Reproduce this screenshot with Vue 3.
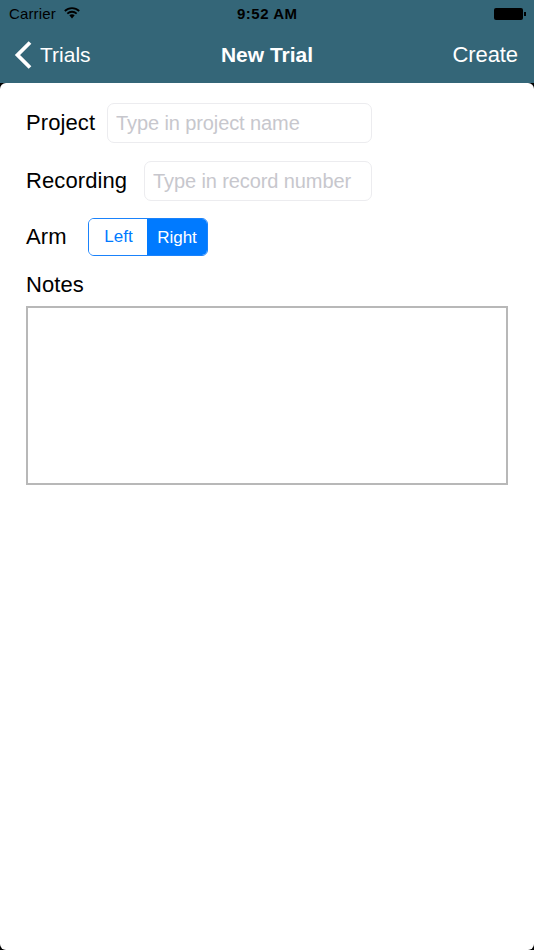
<template>
  <div class="screen">
    <header class="topbar">
      <div class="status">
        <div class="status-left">
          <span class="carrier">Carrier</span>
          <svg class="wifi" width="16" height="12" viewBox="0 0 16 12">
            <path d="M.8 4C4.9 .1 11.1 .1 15.2 4" />
            <path d="M3.3 6.6C6 4.1 10 4.1 12.7 6.6" />
            <path class="wedge" d="M5.3 8.3C7 7 9 7 10.7 8.3L8 11.6Z" />
          </svg>
        </div>
        <span class="clock">9:52 AM</span>
        <div class="battery">
          <div class="battery-body"></div>
          <div class="battery-nub"></div>
        </div>
      </div>
      <nav class="nav">
        <a class="back">
          <svg width="18" height="28" viewBox="0 0 18 28">
            <path d="M16 1.5L3.5 14L16 26.5" />
          </svg>
          <span>Trials</span>
        </a>
        <span class="title">New Trial</span>
        <a class="create">Create</a>
      </nav>
    </header>

    <main class="card">
      <div class="row">
        <label class="label label-project">Project</label>
        <input class="field" type="text" placeholder="Type in project name" />
      </div>
      <div class="row">
        <label class="label label-recording">Recording</label>
        <input class="field" type="text" placeholder="Type in record number" />
      </div>
      <div class="row row-arm">
        <label class="label label-arm">Arm</label>
        <div class="segment">
          <button
            v-for="side in sides"
            :key="side"
            type="button"
            class="segment-btn"
            :class="{ active: arm === side }"
            @click="arm = side"
          >
            {{ side }}
          </button>
        </div>
      </div>
      <label class="label notes-label">Notes</label>
      <textarea class="notes"></textarea>
    </main>
  </div>
</template>

<script setup>
import { ref } from "vue";

const sides = ["Left", "Right"];
const arm = ref("Right");
</script>

<style>
html,
body {
  background: #000;
}
</style>

<style scoped>
.screen {
  width: 534px;
  height: 950px;
  display: flex;
  flex-direction: column;
  background: #000;
  font-family: "Liberation Sans", Arial, sans-serif;
  overflow: hidden;
}

.topbar {
  height: 83px;
  flex-shrink: 0;
  background: #346678;
}

.status {
  height: 29px;
  display: flex;
  align-items: center;
  justify-content: space-between;
  position: relative;
  padding: 0 8px 2px 9px;
  box-sizing: border-box;
  font-size: 15px;
  color: #000;
}

.status-left {
  display: flex;
  align-items: center;
  gap: 8px;
}

.carrier {
  letter-spacing: 0.15px;
}

.wifi {
  margin-top: -2px;
}

.wifi path {
  fill: none;
  stroke: #000;
  stroke-width: 1.8;
}

.wifi .wedge {
  fill: #000;
  stroke: none;
}

.clock {
  position: absolute;
  left: 237px;
  font-weight: bold;
  letter-spacing: 0.5px;
}

.battery {
  display: flex;
  align-items: center;
}

.battery-body {
  width: 29px;
  height: 12px;
  background: #000;
  border-radius: 2px;
}

.battery-nub {
  width: 2px;
  height: 4px;
  margin-left: 1px;
  background: #000;
}

.nav {
  height: 54px;
  display: flex;
  align-items: center;
  justify-content: space-between;
  position: relative;
  padding: 0 16px 2px 14px;
  box-sizing: border-box;
  color: #fff;
}

.back {
  display: flex;
  align-items: center;
  gap: 8px;
  font-size: 21px;
}

.back svg {
  display: block;
}

.back path {
  fill: none;
  stroke: #fff;
  stroke-width: 3.8;
}

.title {
  position: absolute;
  left: 0;
  right: 0;
  text-align: center;
  font-size: 21px;
  font-weight: bold;
}

.create {
  font-size: 22px;
  letter-spacing: -0.1px;
}

.card {
  flex: 1;
  display: flex;
  flex-direction: column;
  padding: 20px 26px 0;
  background: #fff;
  border-radius: 6px;
}

.row {
  display: flex;
  align-items: center;
  width: 346px;
  margin-bottom: 18px;
}

.row-arm {
  margin-top: -1px;
  margin-bottom: 16px;
}

.label {
  flex-shrink: 0;
  font-size: 22px;
  letter-spacing: 0.1px;
  color: #000;
}

.label-project {
  width: 81px;
}

.label-recording {
  width: 118px;
}

.label-arm {
  width: 62px;
}

.field {
  flex: 1;
  min-width: 0;
  height: 40px;
  padding: 0 8px;
  box-sizing: border-box;
  border: 1px solid #ececef;
  border-radius: 7px;
  background: #fff;
  font-family: inherit;
  font-size: 20px;
  letter-spacing: -0.1px;
  outline: none;
}

.field::placeholder {
  color: #c7c7cd;
  opacity: 1;
}

.segment {
  display: flex;
  width: 120px;
  height: 38px;
  box-sizing: border-box;
  border: 1.5px solid #1a82fb;
  border-radius: 6px;
  overflow: hidden;
}

.segment-btn {
  width: 58px;
  padding: 0 0 0 1px;
  border: 0;
  background: #fff;
  color: #007aff;
  font-family: inherit;
  font-size: 17px;
}

.segment-btn.active {
  flex: 1;
  padding: 2px 0 0;
  background: #007aff;
  color: #fff;
}

.notes-label {
  line-height: 25px;
  margin-bottom: 9px;
}

.notes {
  display: block;
  width: 482px;
  height: 179px;
  box-sizing: border-box;
  border: 2px solid #b8b8b8;
  border-radius: 0;
  background: #fff;
  resize: none;
  outline: none;
}
</style>
